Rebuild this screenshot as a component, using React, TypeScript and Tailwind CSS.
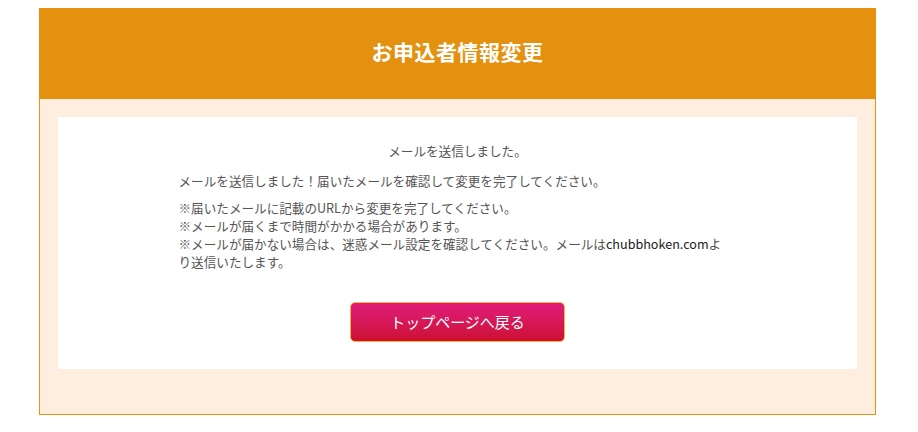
export default function App() {
  return (
    <div
      className="min-h-[432px] bg-white pt-[8px]"
      style={{ fontFamily: '"Noto Sans CJK JP", "Noto Sans", sans-serif' }}
    >
      <div className="ml-[39px] w-[837px] border border-[#e8930f] bg-[#fdeee0]">
        {/* Header */}
        <div className="-mx-px -mt-px flex h-[91px] items-center justify-center bg-[#e3910f]">
          <h1 className="-mt-[4px] text-[21px] font-bold tracking-[0.5px] text-white">お申込者情報変更</h1>
        </div>

        {/* Body */}
        <div className="px-[18px] pt-[18px] pb-[45px]">
          <div className="bg-white pt-[25px] pb-[27px]">
            <p className="text-center text-[12.6px] leading-[18px] text-[#555]">メールを送信しました。</p>
            <div className="mx-auto mt-[12px] w-[560px] pl-[1px] text-[12.6px] leading-[18px] text-[#555]">
              <p>メールを送信しました！届いたメールを確認して変更を完了してください。</p>
              <p className="mt-[9px]">
                ※届いたメールに記載のURLから変更を完了してください。
                <br />
                ※メールが届くまで時間がかかる場合があります。
                <br />
                ※メールが届かない場合は、迷惑メール設定を確認してください。メールは
                <span className="text-[#222]">chubbhoken.com</span>よ
                <br />
                り送信いたします。
              </p>
            </div>
            <div className="mt-[31px] flex justify-center">
              <button className="h-[40px] w-[215px] rounded-[5px] border border-[#f5b43a] bg-gradient-to-b from-[#e01a7a] to-[#cc1030] text-[15px] text-white">
                トップページへ戻る
              </button>
            </div>
          </div>
        </div>
      </div>
    </div>
  )
}
